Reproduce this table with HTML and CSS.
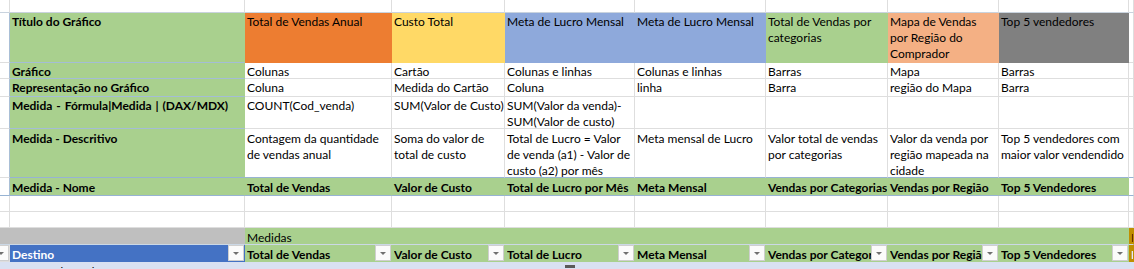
FILE: index.html
```html
<!DOCTYPE html>
<html lang="pt-BR">
<head>
<meta charset="utf-8">
<title>Planilha de Medidas</title>
<link rel="stylesheet" href="styles.css">
</head>
<body>
<div class="sheet">
  <!-- row 1 -->
  <div class="c top"></div><div class="c top"></div><div class="c top"></div><div class="c top"></div><div class="c top"></div>
  <div class="c top"></div><div class="c top"></div><div class="c top"></div><div class="c top"></div><div class="c top"></div>

  <!-- row 2 -->
  <div class="c edge"></div>
  <div class="c g lab b">Título do Gráfico</div>
  <div class="c or">Total de Vendas Anual</div>
  <div class="c y">Custo Total</div>
  <div class="c bu">Meta de Lucro Mensal</div>
  <div class="c bu">Meta de Lucro Mensal</div>
  <div class="c g">Total de Vendas por<br>categorias</div>
  <div class="c lo">Mapa de Vendas<br>por Região do<br>Comprador</div>
  <div class="c gr">Top 5 vendedores</div>
  <div class="c"></div>

  <!-- row 3 -->
  <div class="c edge"></div>
  <div class="c g lab b">Gráfico</div>
  <div class="c">Colunas</div>
  <div class="c">Cartão</div>
  <div class="c">Colunas e linhas</div>
  <div class="c">Colunas e linhas</div>
  <div class="c">Barras</div>
  <div class="c">Mapa</div>
  <div class="c">Barras</div>
  <div class="c"></div>

  <!-- row 4 -->
  <div class="c edge"></div>
  <div class="c g lab b">Representação no Gráfico</div>
  <div class="c">Coluna</div>
  <div class="c">Medida do Cartão</div>
  <div class="c">Coluna</div>
  <div class="c">linha</div>
  <div class="c">Barra</div>
  <div class="c">região do Mapa</div>
  <div class="c">Barra</div>
  <div class="c"></div>

  <!-- row 5 -->
  <div class="c edge"></div>
  <div class="c g lab b wide">Medida - Fórmula|Medida | (DAX/MDX)</div>
  <div class="c">COUNT(Cod_venda)</div>
  <div class="c">SUM(Valor de Custo)</div>
  <div class="c">SUM(Valor da venda)-<br>SUM(Valor de custo)</div>
  <div class="c"></div>
  <div class="c"></div>
  <div class="c"></div>
  <div class="c"></div>
  <div class="c"></div>

  <!-- row 6 -->
  <div class="c edge"></div>
  <div class="c g lab b r6 p2">Medida - Descritivo</div>
  <div class="c r6 p2">Contagem da quantidade<br>de vendas anual</div>
  <div class="c r6 p2">Soma do valor de<br>total de custo</div>
  <div class="c r6 p2">Total de Lucro = Valor<br>de venda (a1) - Valor de<br>custo (a2) por mês</div>
  <div class="c r6 p2">Meta mensal de Lucro</div>
  <div class="c r6 p2">Valor total de vendas<br>por categorias</div>
  <div class="c r6 p2">Valor da venda por<br>região mapeada na<br>cidade</div>
  <div class="c r6 p2">Top 5 vendedores com<br>maior valor vendendido</div>
  <div class="c r6"></div>

  <!-- row 7 -->
  <div class="c edge nm"></div>
  <div class="c g nm b p2">Medida - Nome</div>
  <div class="c g nm b p2">Total de Vendas</div>
  <div class="c g nm b p2">Valor de Custo</div>
  <div class="c g nm b p2">Total de Lucro por Mês</div>
  <div class="c g nm b p2">Meta Mensal</div>
  <div class="c g nm b p2">Vendas por Categorias</div>
  <div class="c g nm b p2">Vendas por Região</div>
  <div class="c g nm b p2">Top 5 Vendedores</div>
  <div class="c nm"></div>

  <!-- row 8 -->
  <div class="c"></div><div class="c"></div><div class="c"></div><div class="c"></div><div class="c"></div>
  <div class="c"></div><div class="c"></div><div class="c"></div><div class="c"></div><div class="c"></div>

  <!-- row 9 -->
  <div class="c"></div><div class="c"></div><div class="c"></div><div class="c"></div><div class="c"></div>
  <div class="c"></div><div class="c"></div><div class="c"></div><div class="c"></div><div class="c"></div>

  <!-- row 10 -->
  <div class="c sg r10 span2"></div>
  <div class="c g r10 span7 p2">Medidas</div>
  <div class="c gold r10 p2"><span class="dk">D</span></div>

  <!-- row 11 -->
  <div class="c hd stub"><span class="fb"></span></div>
  <div class="c hd bl"><span class="ht">Destino</span><span class="fb"></span></div>
  <div class="c hd g"><span class="ht">Total de Vendas</span><span class="fb"></span></div>
  <div class="c hd g"><span class="ht">Valor de Custo</span><span class="fb"></span></div>
  <div class="c hd g"><span class="ht">Total de Lucro</span><span class="fb"></span></div>
  <div class="c hd g"><span class="ht">Meta Mensal</span><span class="fb"></span></div>
  <div class="c hd g"><span class="ht">Vendas por Categorias</span><span class="fb"></span></div>
  <div class="c hd g"><span class="ht">Vendas por Região</span><span class="fb"></span></div>
  <div class="c hd g"><span class="ht">Top 5 Vendedores</span><span class="fb"></span></div>
  <div class="c hd gold"><span class="lt">D</span></div>

  <!-- row 12 -->
  <div class="c lb"></div>
  <div class="c lb p2">Compra de Dados BI Cartões - ST_VENDAS 1.0</div>
  <div class="c lb"></div>
  <div class="c lb"></div>
  <div class="c lb ico"><span class="mark"></span></div>
  <div class="c lb"></div>
  <div class="c lb"></div>
  <div class="c lb"></div>
  <div class="c lb"></div>
  <div class="c lb"></div>
</div>
</body>
</html>
```

FILE: styles.css
```css
* { box-sizing: border-box; margin: 0; padding: 0; }
html, body { background: #ffffff; }
body {
  margin: 0;
  overflow: hidden;
  font-family: Lato, "Liberation Sans", sans-serif;
  font-size: 12px;
  color: #000000;
}
.sheet {
  display: grid;
  grid-template-columns: 10px 235px 147px 113px 130px 131px 122px 111px 130px 1fr;
  grid-template-rows: 13px 50px 16px 18px 32px 49px 18px 16px 16px 17px 17px 7px;
  width: 1134px;
  height: 269px;
}
.c {
  border-right: 1px solid #dedede;
  border-bottom: 1px solid #dedede;
  padding: 1px 2px 0 2px;
  line-height: 16px;
  white-space: nowrap;
  overflow: hidden;
}
.p2 { padding-top: 2px; }
.b { font-weight: 700; }
.wide { word-spacing: 1px; }
.top { border-bottom-color: #c9d3de; }
.edge { border-right-color: #a9bfd6; }

/* fills */
.g { background: #a9d08e; border-color: transparent; }
.or { background: #ed7d31; border-color: transparent; }
.y { background: #ffd966; border-color: transparent; }
.bu { background: #8ea9db; border-color: transparent; }
.lo { background: #f4b084; border-color: transparent; }
.gr { background: #808080; border-color: transparent; }
.sg { background: #bfbfbf; border-color: transparent; }
.bl { background: #4472c4; border-color: transparent; color: #ffffff; }
.gold { background: #bf8f00; border-color: transparent; }
.lb { background: #d9e1f2; border-color: transparent; }

.g.lab { border-bottom-color: #a4bdd6; }
.r6 { border-bottom-color: #97b3d3; }
.g.r6 { border-bottom-color: #97b3d3; }
.nm { border-bottom-color: #97b3d3; }
.g.nm { border-bottom-color: #97b3d3; }
.r10 { border-bottom-color: #cbd8e6; }
.g.r10, .sg.r10, .gold.r10 { border-bottom-color: #cbd8e6; }

.span2 { grid-column: span 2; }
.span7 { grid-column: span 7; }

.dk { color: #2b2000; }
.lt { color: #f2f2f2; }

/* table header row with filter buttons */
.hd {
  display: flex;
  align-items: flex-start;
  padding: 0 0 0 2px;
  font-weight: 700;
}
.hd .ht {
  flex: 1 1 auto;
  min-width: 0;
  overflow: hidden;
  padding-top: 2px;
}
.fb {
  flex: none;
  width: 16px;
  height: 16px;
  background: #fbfbfb;
  border: 1px solid #cfcfcf;
  display: flex;
  align-items: center;
  justify-content: center;
}
.fb::after {
  content: "";
  border-left: 3px solid transparent;
  border-right: 3px solid transparent;
  border-top: 3px solid #707070;
}
.stub { padding: 0; border-right-color: #dedede; }
.stub .fb { margin-left: -7px; }
.gold.hd { padding-top: 2px; }

.ico { padding: 3px 0 0 60px; }
.mark {
  display: block;
  width: 10px;
  height: 8px;
  background: #5a5a5a;
}
```
